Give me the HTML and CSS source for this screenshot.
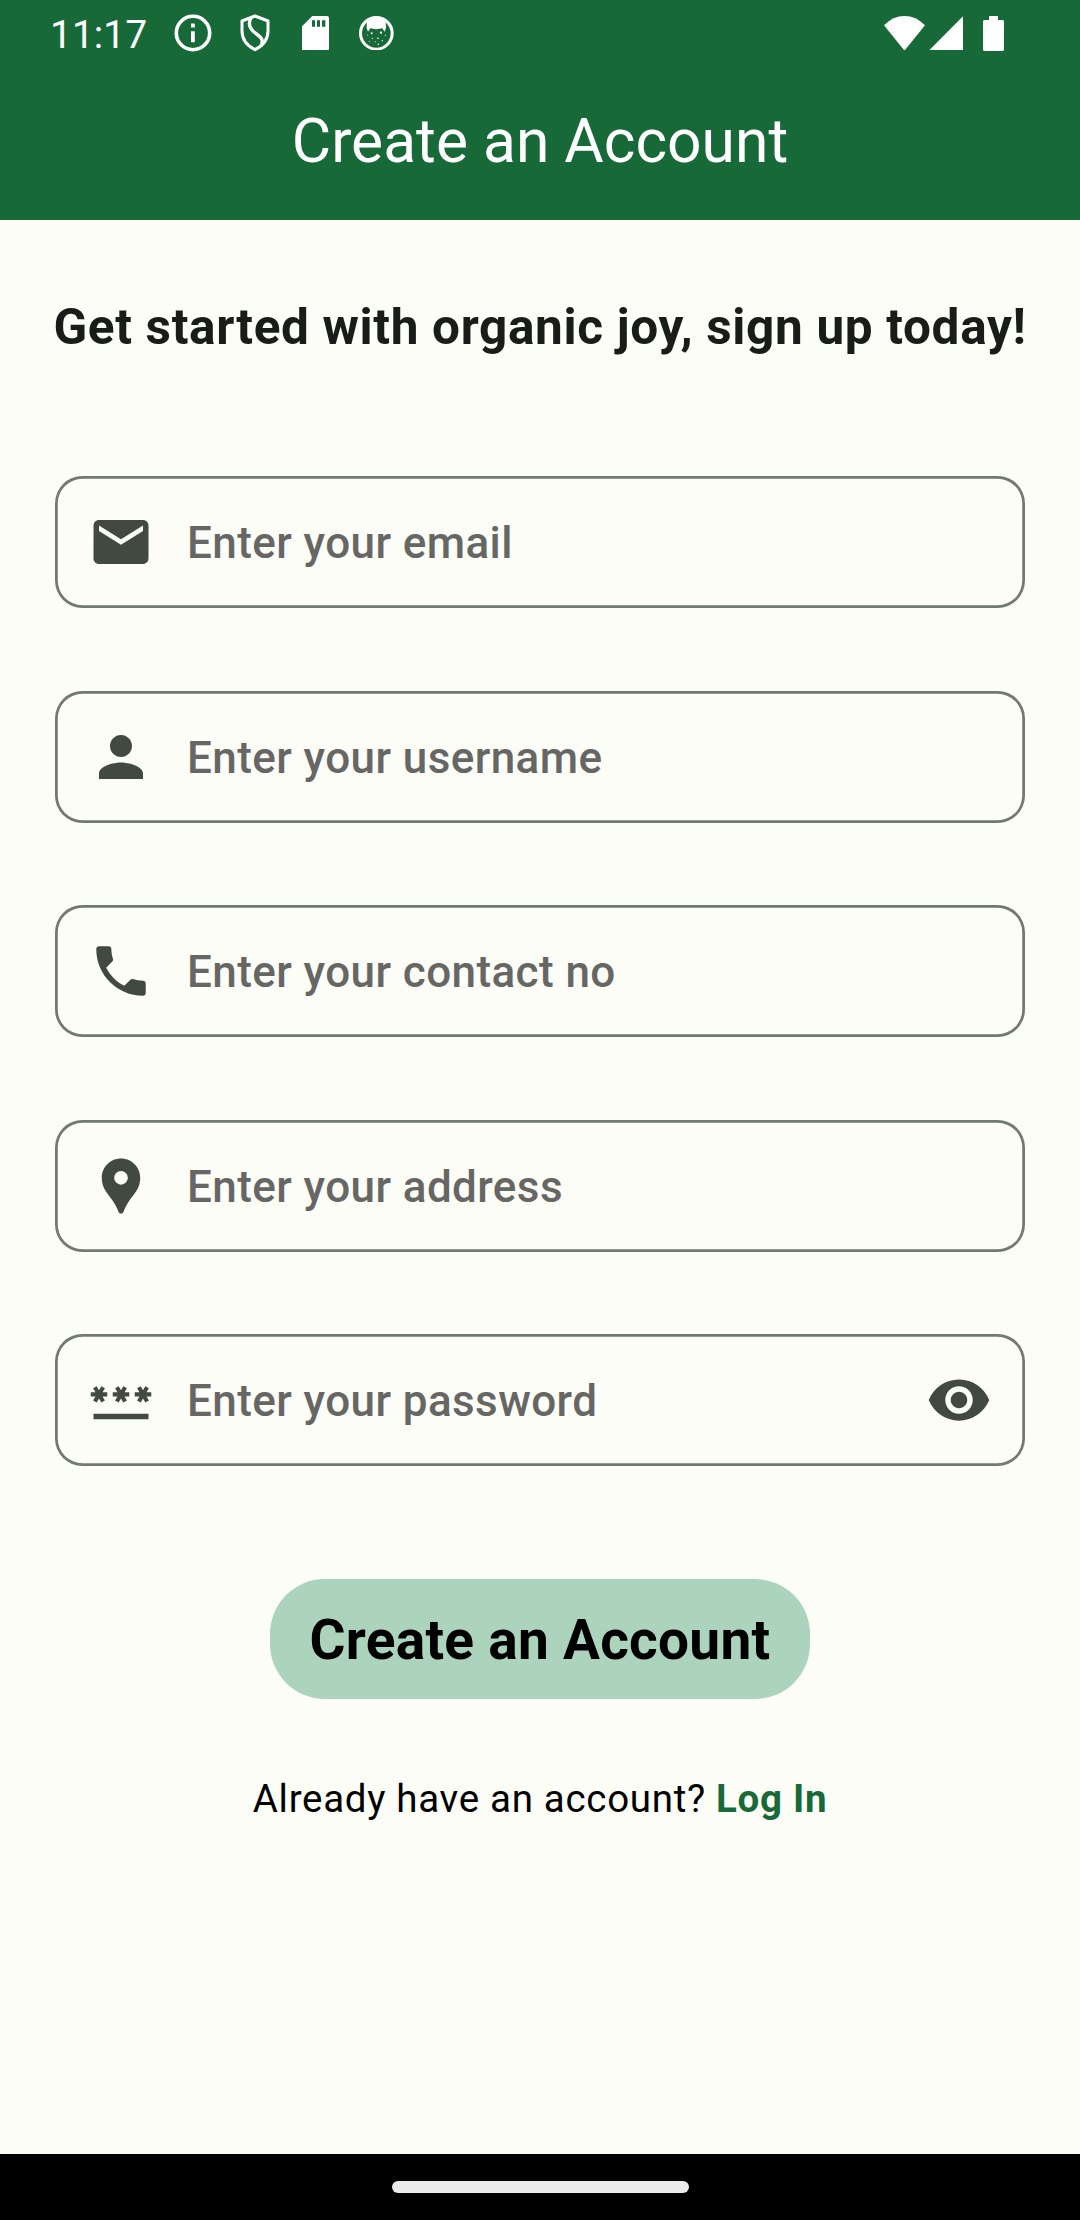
FILE: index.html
```html
<!DOCTYPE html>
<html lang="en">
<head>
<meta charset="utf-8">
<title>Create an Account</title>
<link rel="stylesheet" href="styles.css">
</head>
<body>
<div class="screen">
  <header class="app-bar">
    <div class="status-bar">
      <div class="status-left">
        <span class="clock">11:17</span>
        <svg class="status-info" viewBox="0 0 38 38"><circle cx="19" cy="19" r="16.700" fill="none" stroke="#fff" stroke-width="3.600"/><path d="M17 9.600h3.800v3.800H17zM17 17.200h3.800v11H17z" fill="#fff"/></svg>
        <svg class="status-shield" viewBox="0 0 96 114"><path d="M48 6 9 21v29c0 26 17 46 39 57 22-11 39-31 39-57V21z" fill="none" stroke="#fff" stroke-width="9" stroke-linejoin="round"/><path d="M36 11c-9 17-5 31 9 43 16 13 33 20 20 43" fill="none" stroke="#fff" stroke-width="10"/></svg>
        <svg class="status-sd" viewBox="0 0 81 104"><path fill-rule="evenodd" d="M31 0h44q6 0 6 6v92q0 6-6 6H6q-6 0-6-6V31zM30 13v19h9V13zm15 0v19h9V13zm15 0v19h10V13z" fill="#fff"/></svg>
        <svg class="status-cat" viewBox="0 0 104 104"><circle cx="52" cy="52" r="47.500" fill="none" stroke="#fff" stroke-width="9"/><path d="M24 16C40 2 64 2 80 16l1 20-4 11-7-10q-18 5-36 0l-7 10-4-11z" fill="#fff"/><g fill="#fff"><circle cx="38" cy="52" r="3"/><circle cx="66" cy="50" r="3.500"/><circle cx="57" cy="67" r="2.500"/><circle cx="40" cy="67" r="1.800"/><circle cx="26" cy="57" r="1.500"/><circle cx="79" cy="58" r="1.800"/><circle cx="31" cy="76" r="1.500"/><circle cx="49" cy="77" r="1.500"/><circle cx="70" cy="74" r="1.800"/><circle cx="58" cy="85" r="2.200"/></g></svg>
      </div>
      <div class="status-right">
        <svg class="status-wifi" viewBox="0 0 123 104"><path d="M0 28Q27 0 61.500 0T123 28L61.500 104z" fill="#fff"/></svg>
        <svg class="status-signal" viewBox="0 0 103 104"><path d="M103 0v104H0z" fill="#fff"/></svg>
        <svg class="status-battery" viewBox="0 0 63 105"><path d="M18 0h27v12h15l3 3v87l-3 3H3l-3-3V15l3-3h15z" fill="#fff"/></svg>
      </div>
    </div>
    <h1 class="title">Create an Account</h1>
  </header>

  <main class="content">
    <h2 class="tagline">Get started with organic joy, sign up today!</h2>
    <form class="fields">
      <label class="field">
        <svg class="icon" viewBox="0 0 24 24"><path d="M20 4H4c-1.100 0-1.990.9-1.990 2L2 18c0 1.100.9 2 2 2h16c1.100 0 2-.9 2-2V6c0-1.100-.9-2-2-2zm0 4-8 5-8-5V6l8 5 8-5v2z"/></svg>
        <span class="hint">Enter your email</span>
      </label>
      <label class="field">
        <svg class="icon" viewBox="0 0 24 24"><path d="M12 12c2.210 0 4-1.790 4-4s-1.790-4-4-4-4 1.790-4 4 1.790 4 4 4zm0 2c-2.670 0-8 1.340-8 4v2h16v-2c0-2.660-5.330-4-8-4z"/></svg>
        <span class="hint">Enter your username</span>
      </label>
      <label class="field">
        <svg class="icon" viewBox="0 0 24 24"><path d="M6.620 10.790c1.440 2.830 3.760 5.140 6.590 6.590l2.200-2.200c.27-.27.67-.36 1.020-.24 1.120.37 2.330.57 3.570.57.55 0 1 .45 1 1V20c0 .55-.45 1-1 1-9.390 0-17-7.610-17-17 0-.55.45-1 1-1h3.500c.55 0 1 .45 1 1 0 1.250.2 2.450.57 3.570.11.35.03.74-.25 1.020l-2.200 2.200z"/></svg>
        <span class="hint">Enter your contact no</span>
      </label>
      <label class="field">
        <svg class="icon" viewBox="0 0 24 24"><path d="M12 2C8.130 2 5 5.130 5 9c0 1.740.5 3.370 1.410 4.840.95 1.540 2.200 2.860 3.160 4.400.47.75.81 1.450 1.170 2.260.26.55.47 1.500 1.260 1.500s1-.95 1.250-1.500c.37-.81.7-1.510 1.170-2.260.96-1.530 2.210-2.850 3.160-4.400C18.500 12.370 19 10.740 19 9c0-3.870-3.130-7-7-7zm0 9.500a2.500 2.500 0 0 1 0-5 2.500 2.500 0 0 1 0 5z"/></svg>
        <span class="hint">Enter your address</span>
      </label>
      <label class="field">
        <svg class="icon" viewBox="0 0 24 24"><path d="M2 17h20v2H2v-2zm1.150-4.050L4 11.470l.85 1.480 1.300-.75-.85-1.480H7v-1.500H5.300l.85-1.470L4.850 7 4 8.470 3.150 7l-1.300.75.85 1.470H1v1.500h1.700l-.85 1.480 1.300.75zm6.700-.75 1.300.75.85-1.480.85 1.480 1.300-.75-.85-1.480H15v-1.500h-1.700l.85-1.470-1.300-.75L12 8.470 11.150 7l-1.300.75.85 1.470H9v1.500h1.700l-.85 1.480zM23 9.220h-1.700l.85-1.470-1.300-.75L20 8.470 19.150 7l-1.300.75.85 1.470H17v1.500h1.700l-.85 1.480 1.300.75.85-1.480.85 1.480 1.300-.75-.85-1.480H23v-1.500z"/></svg>
        <span class="hint">Enter your password</span>
        <svg class="icon" viewBox="0 0 24 24"><path d="M12 4.500C7 4.500 2.730 7.610 1 12c1.730 4.390 6 7.500 11 7.500s9.270-3.110 11-7.500c-1.730-4.390-6-7.500-11-7.500zM12 17c-2.760 0-5-2.240-5-5s2.240-5 5-5 5 2.240 5 5-2.240 5-5 5zm0-8c-1.660 0-3 1.340-3 3s1.340 3 3 3 3-1.340 3-3-1.340-3-3-3z"/></svg>
      </label>
    </form>
    <button class="submit" type="button">Create an Account</button>
    <p class="login">Already have an account? <a class="login-link">Log In</a></p>
  </main>

  <footer class="nav-bar"><span class="nav-handle"></span></footer>
</div>
</body>
</html>
```
FILE: styles.css
```css
* { box-sizing: border-box; }

body {
  margin: 0;
  font-family: Roboto, "Liberation Sans", sans-serif;
  background: #fcfdf7;
}

.screen {
  display: flex;
  flex-direction: column;
  width: 1080px;
  height: 2220px;
  overflow: hidden;
}

svg { display: block; flex: none; }

.app-bar {
  height: 220px;
  background: #176a38;
  color: #fff;
}

.status-bar {
  display: flex;
  justify-content: space-between;
  height: 66px;
  padding: 0 76px 0 50px;
}

.status-left,
.status-right {
  display: flex;
  align-items: center;
}

.clock {
  width: 124px;
  font-size: 39px;
  line-height: 66px;
  padding-top: 3px;
}

.status-info { width: 38px; height: 38px; margin-right: 26.500px; }
.status-shield { width: 32px; height: 38px; margin-right: 31.500px; }
.status-sd { width: 27px; height: 34.670px; margin-right: 30px; }
.status-cat { width: 34.670px; height: 34.670px; }

.status-wifi { width: 41px; height: 34.670px; margin-right: 4px; }
.status-signal { width: 34px; height: 34.670px; margin-right: 20px; }
.status-battery { width: 21px; height: 35px; }

.title {
  margin: 0;
  padding-top: 40px;
  font-size: 60.500px;
  font-weight: 400;
  line-height: 72px;
  text-align: center;
}

.content {
  display: flex;
  flex: 1;
  flex-direction: column;
  align-items: center;
  padding: 77px 55px 0;
}

.tagline {
  margin: 0 -20px;
  color: #1a1c19;
  font-size: 49.500px;
  font-weight: 700;
  letter-spacing: 0.660px;
  line-height: 60px;
  white-space: nowrap;
}

.fields {
  display: flex;
  flex-direction: column;
  gap: 82.500px;
  width: 970px;
  margin-top: 119px;
}

.field {
  display: flex;
  align-items: center;
  gap: 33px;
  height: 132px;
  padding: 0 33px;
  border-radius: 27.500px;
  box-shadow: inset 0 0 0 2.750px #72796f;
}

.icon {
  width: 66px;
  height: 66px;
  fill: #424940;
}

.hint {
  flex: 1;
  padding-top: 2px;
  color: #666664;
  font-size: 44px;
  font-weight: 500;
  letter-spacing: 0.413px;
}

.submit {
  width: 540px;
  height: 120px;
  margin-top: 113px;
  padding: 0;
  border: 0;
  border-radius: 55px;
  background: #acd3bb;
  color: #000;
  font: 700 55px/120px Roboto, "Liberation Sans", sans-serif;
  letter-spacing: 0.275px;
  padding-top: 2px;
  line-height: 118px;
  white-space: nowrap;
}

.login {
  margin: 77px 0 0;
  color: #000;
  font-size: 38.500px;
  letter-spacing: 0.690px;
  line-height: 46px;
  white-space: nowrap;
}

.login-link { color: #176a38; font-weight: 700; }

.nav-bar {
  display: flex;
  align-items: center;
  justify-content: center;
  height: 66px;
  background: #000;
}

.nav-handle {
  width: 297px;
  height: 12px;
  border-radius: 6px;
  background: #ebebeb;
}
```
